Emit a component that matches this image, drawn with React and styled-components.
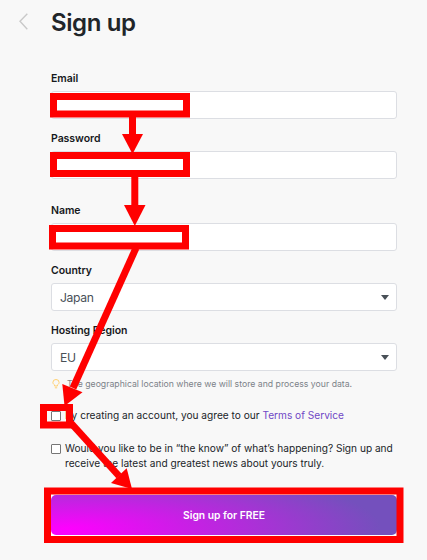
import React from 'react';
import styled, { createGlobalStyle } from 'styled-components';

const GlobalStyle = createGlobalStyle`
  * {
    box-sizing: border-box;
  }

  body {
    margin: 0;
    background: #f8f8f8;
    color: #212529;
    font-family: Inter, 'Liberation Sans', sans-serif;
  }
`;

const Page = styled.main`
  position: relative;
  width: 427px;
  height: 560px;
  padding: 8px 30px 0 19px;
  overflow: hidden;
`;

const Header = styled.header`
  display: flex;
  align-items: center;
  gap: 23px;
  height: 30px;
  margin-bottom: 33px;
`;

const BackIcon = styled.svg`
  width: 9px;
  height: 17px;
  margin-top: -4px;
  fill: none;
  stroke: #c9c9c9;
  stroke-width: 1.4;
`;

const Title = styled.h1`
  margin: 0;
  font-size: 24px;
  font-weight: 600;
  letter-spacing: -0.4px;
  line-height: 30px;
`;

const Form = styled.form`
  display: flex;
  flex-direction: column;
  margin-left: 32px;
`;

const Field = styled.div`
  display: flex;
  flex-direction: column;
  margin-bottom: ${({ $gap = 12 }) => $gap}px;
`;

const Label = styled.label`
  height: 20px;
  color: #16191c;
  font-size: 10.5px;
  font-weight: 600;
  letter-spacing: -0.05px;
  line-height: 15px;
`;

const Input = styled.input`
  width: 100%;
  height: 28px;
  padding: 0 8px;
  border: 1px solid #dcdee3;
  border-radius: 3px;
  background: #fff;
`;

const Select = styled.div`
  display: flex;
  align-items: center;
  justify-content: space-between;
  height: 28px;
  padding: 1px 7px 0 8px;
  border: 1px solid #dcdee3;
  border-radius: 3px;
  background: #fff;
  color: #495057;
  font-size: 12.2px;
  letter-spacing: -0.35px;
`;

const Caret = styled.span`
  margin-top: -1px;
  border: 4px solid transparent;
  border-top: 5px solid #495057;
  border-bottom: 0;
`;

const Hint = styled.p`
  display: flex;
  align-items: center;
  gap: 7px;
  height: 14px;
  margin: 6px 0 17px;
  padding-left: 1px;
  color: #7c8288;
  font-size: 8.7px;
  white-space: nowrap;
`;

const BulbIcon = styled.svg`
  width: 8px;
  height: 10px;
  fill: none;
  stroke: #ffd071;
`;

const CheckRow = styled.label`
  display: flex;
  align-items: flex-start;
  gap: 4px;
  margin-bottom: ${({ $gap }) => $gap}px;
  font-size: 10.14px;
  line-height: 15px;
  white-space: nowrap;
`;

const Checkbox = styled.input`
  appearance: none;
  flex: none;
  width: 10px;
  height: 10px;
  margin: 3px 0 0;
  border: 1px solid #767676;
  border-radius: 1px;
  background: #fff;
`;

const Link = styled.a`
  color: #7048c6;
`;

const SubmitWrap = styled.div`
  display: grid;
  height: 41px;
  background: #fff;
`;

const Submit = styled.button`
  height: 40px;
  padding: 0 0 1px;
  border: 0;
  border-radius: 5px;
  background: radial-gradient(315px 66px at 15px 34px, #ff00ff 0%, #7450bd 100%);
  color: #fff;
  font-family: inherit;
  font-size: 10.3px;
  font-weight: 600;
`;

const Annotations = styled.svg`
  position: absolute;
  inset: 0;
  fill: #ff0000;
  stroke: none;
  pointer-events: none;
`;

// Each frame is [x, y, width, height] measured along the middle of its stroke.
const frames = [
  [53.5, 96.5, 133, 17.5],
  [53.5, 155.5, 133, 18],
  [52.5, 228.5, 133, 17.5],
  [43.5, 407.5, 26, 17.5],
  [47.5, 491, 352.5, 48.5],
];

const arrows = [
  { line: 'M132.5 116V136', head: '122,134 143,134 132.5,154' },
  { line: 'M134.8 176V207', head: '124,205 145.5,205 134.8,226' },
  { line: 'M136 248L73 388', head: '62.3,384 82.5,392.3 64.5,406' },
  { line: 'M70 422L119 476', head: '111,483 126.7,468.3 132,489' },
];

const App = () => {
  return (
    <>
      <GlobalStyle />
      <Page>
        <Header>
          <BackIcon viewBox="0 0 9 17">
            <path d="M8.3 0.7L1 8.3l7.3 7.9" />
          </BackIcon>
          <Title>Sign up</Title>
        </Header>
        <Form>
          <Field>
            <Label htmlFor="email">Email</Label>
            <Input id="email" type="email" />
          </Field>
          <Field $gap={24}>
            <Label htmlFor="password">Password</Label>
            <Input id="password" type="password" />
          </Field>
          <Field>
            <Label htmlFor="name">Name</Label>
            <Input id="name" />
          </Field>
          <Field>
            <Label>Country</Label>
            <Select>
              Japan
              <Caret />
            </Select>
          </Field>
          <Field $gap={0}>
            <Label>Hosting Region</Label>
            <Select>
              EU
              <Caret />
            </Select>
          </Field>
          <Hint>
            <BulbIcon viewBox="0 0 8 10">
              <path d="M2.6 7V6C1.4 5.1.9 4.4.9 3.4a3.1 2.9 0 0 1 6.2 0c0 1-.5 1.7-1.7 2.6v1zM2.8 8.8h2.4" />
            </BulbIcon>
            The geographical location where we will store and process your data.
          </Hint>
          <CheckRow $gap={18}>
            <Checkbox type="checkbox" />
            <span>
              By creating an account, you agree to our <Link>Terms of Service</Link>
            </span>
          </CheckRow>
          <CheckRow $gap={24}>
            <Checkbox type="checkbox" />
            <span>
              Would you like to be in “the know” of what’s happening? Sign up and
              <br />
              receive the latest and greatest news about yours truly.
            </span>
          </CheckRow>
          <SubmitWrap>
            <Submit type="button">Sign up for FREE</Submit>
          </SubmitWrap>
        </Form>
        <Annotations width="427" height="560" viewBox="0 0 427 560">
          {frames.map(([x, y, width, height]) => (
            <rect key={y} x={x} y={y} width={width} height={height} fill="none" stroke="#ff0000" strokeWidth="7" />
          ))}
          {arrows.map(({ line, head }) => (
            <g key={line}>
              <path d={line} stroke="#ff0000" strokeWidth="7" />
              <polygon points={head} />
            </g>
          ))}
        </Annotations>
      </Page>
    </>
  );
};

export default App;
